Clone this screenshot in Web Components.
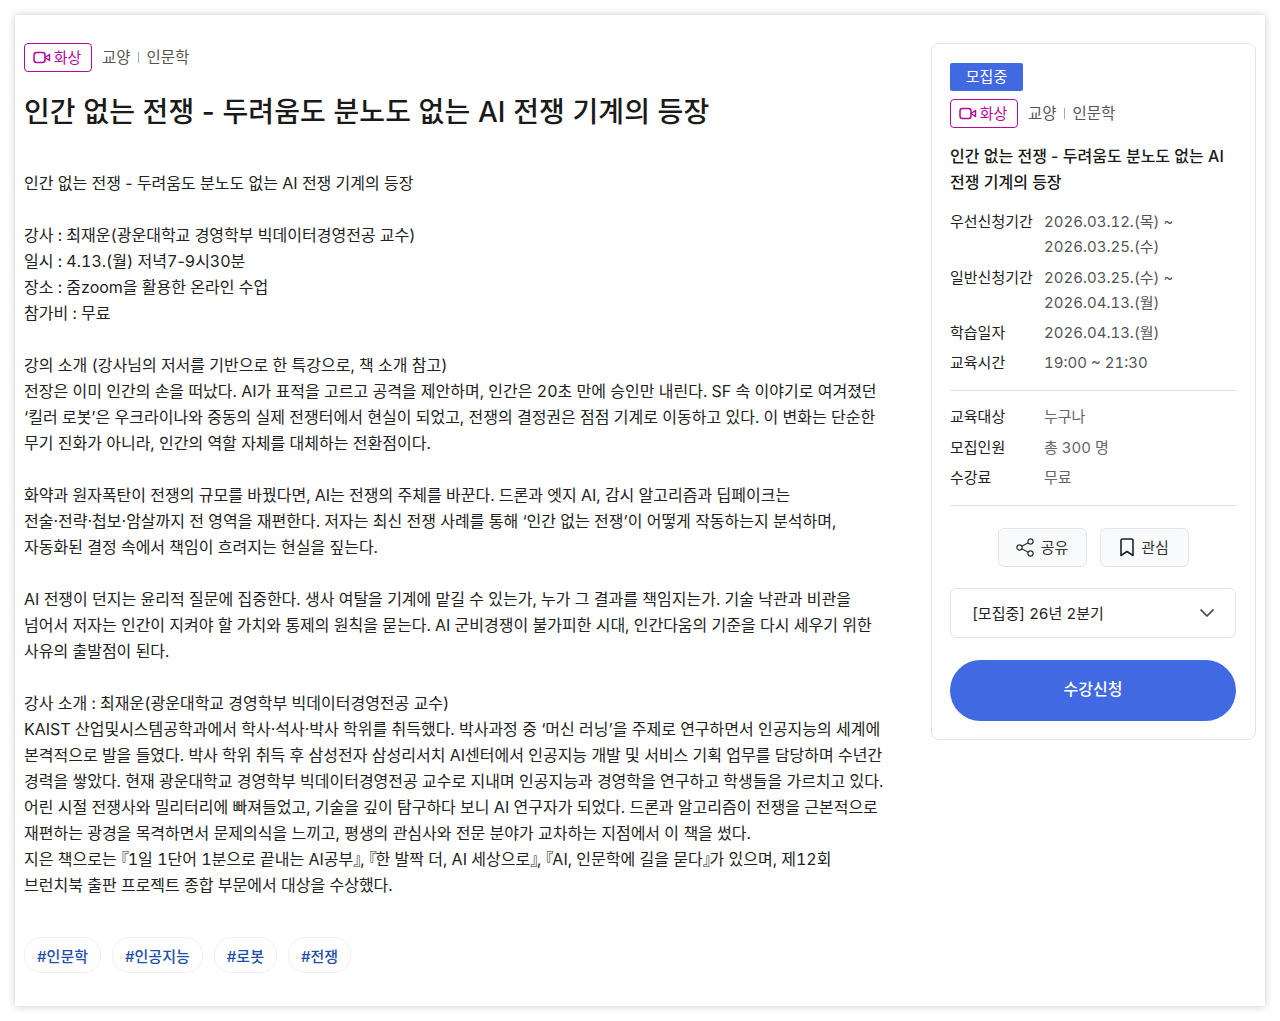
<!DOCTYPE html>
<html lang="ko">
<head>
<meta charset="utf-8">
<title>인간 없는 전쟁</title>
<style>
    html, body { margin: 0; padding: 0; background: #fff; }
    body {
        font-family: "Inter", "Noto Sans CJK KR", sans-serif;
        font-variant-numeric: tabular-nums;
        color: #1a1a1a;
    }
    .br { font-feature-settings: "halt"; letter-spacing: -1.2px; }
    .nt { font-variant-numeric: normal; }
</style>
</head>
<body>
<course-page>
    <course-main>
        <p>인간 없는 전쟁 <span class="nt">-</span> 두려움도 분노도 없는 AI 전쟁 기계의 등장</p>
        <p>강사 : 최재운(광운대학교 경영학부 빅데이터경영전공 교수)<br>일시 : 4.13.(월) 저녁7<span class="nt">-</span>9시30분<br>장소 : 줌zoom을 활용한 온라인 수업<br>참가비 : 무료</p>
        <p>강의 소개 (강사님의 저서를 기반으로 한 특강으로, 책 소개 참고)<br>전장은 이미 인간의 손을 떠났다. AI가 표적을 고르고 공격을 제안하며, 인간은 20초 만에 승인만 내린다. SF 속 이야기로 여겨졌던<br>‘킬러 로봇’은 우크라이나와 중동의 실제 전쟁터에서 현실이 되었고, 전쟁의 결정권은 점점 기계로 이동하고 있다. 이 변화는 단순한<br>무기 진화가 아니라, 인간의 역할 자체를 대체하는 전환점이다.</p>
        <p>화약과 원자폭탄이 전쟁의 규모를 바꿨다면, AI는 전쟁의 주체를 바꾼다. 드론과 엣지 AI, 감시 알고리즘과 딥페이크는<br>전술·전략·첩보·암살까지 전 영역을 재편한다. 저자는 최신 전쟁 사례를 통해 ‘인간 없는 전쟁’이 어떻게 작동하는지 분석하며,<br>자동화된 결정 속에서 책임이 흐려지는 현실을 짚는다.</p>
        <p>AI 전쟁이 던지는 윤리적 질문에 집중한다. 생사 여탈을 기계에 맡길 수 있는가, 누가 그 결과를 책임지는가. 기술 낙관과 비관을<br>넘어서 저자는 인간이 지켜야 할 가치와 통제의 원칙을 묻는다. AI 군비경쟁이 불가피한 시대, 인간다움의 기준을 다시 세우기 위한<br>사유의 출발점이 된다.</p>
        <p>강사 소개 : 최재운(광운대학교 경영학부 빅데이터경영전공 교수)<br>KAIST 산업및시스템공학과에서 학사·석사·박사 학위를 취득했다. 박사과정 중 ‘머신 러닝’을 주제로 연구하면서 인공지능의 세계에<br>본격적으로 발을 들였다. 박사 학위 취득 후 삼성전자 삼성리서치 AI센터에서 인공지능 개발 및 서비스 기획 업무를 담당하며 수년간<br>경력을 쌓았다. 현재 광운대학교 경영학부 빅데이터경영전공 교수로 지내며 인공지능과 경영학을 연구하고 학생들을 가르치고 있다.<br>어린 시절 전쟁사와 밀리터리에 빠져들었고, 기술을 깊이 탐구하다 보니 AI 연구자가 되었다. 드론과 알고리즘이 전쟁을 근본적으로<br>재편하는 광경을 목격하면서 문제의식을 느끼고, 평생의 관심사와 전문 분야가 교차하는 지점에서 이 책을 썼다.<br>지은 책으로는 <span class="br">『</span>1일 1단어 1분으로 끝내는 AI공부<span class="br">』</span>, <span class="br">『</span>한 발짝 더, AI 세상으로<span class="br">』</span>, <span class="br">『</span>AI, 인문학에 길을 묻다<span class="br">』</span>가 있으며, 제12회<br>브런치북 출판 프로젝트 종합 부문에서 대상을 수상했다.</p>
    </course-main>
    <course-aside></course-aside>
</course-page>

<script>
const VIDEO_ICON = `<svg width="18" height="13" viewBox="0 0 18 13" fill="none" stroke="currentColor" stroke-width="1.5" stroke-linejoin="round"><rect x="1" y="1.5" width="11" height="10" rx="2.5"/><path d="M12 6.5l4.5-3v6z"/></svg>`;

class CourseMeta extends HTMLElement {
    connectedCallback() {
        this.attachShadow({mode: 'open'}).innerHTML = `
        <style>
            :host { display: flex; align-items: center; font-size: 15.5px; color: #555; }
            .badge {
                display: flex; align-items: center; justify-content: center; gap: 3px;
                box-sizing: border-box; width: 68px; height: 29px; margin-right: 10px; padding-right: 2px;
                border: 1px solid #b5089b; border-radius: 4px; color: #b5089b; font-size: 15px;
            }
            .t { margin-bottom: 3px; }
            .sep { width: 1px; height: 11px; background: #aaa; margin: 0 8px 0 7px; }
        </style>
        <span class="badge">${VIDEO_ICON}<span class="t">화상</span></span>
        <span class="t">교양</span><span class="sep"></span><span class="t">인문학</span>`;
    }
}
customElements.define("course-meta", CourseMeta);

class TagChip extends HTMLElement {
    connectedCallback() {
        this.attachShadow({mode: 'open'}).innerHTML = `
        <style>
            :host {
                display: flex; align-items: center; height: 34px; padding: 0 12px;
                border: 1px solid #eef0f2; border-radius: 17px;
                font-size: 15px; font-weight: 500; color: #1f4fa8;
            }
        </style><slot></slot>`;
    }
}
customElements.define("tag-chip", TagChip);

class InfoRow extends HTMLElement {
    connectedCallback() {
        const grey = this.hasAttribute('grey');
        this.attachShadow({mode: 'open'}).innerHTML = `
        <style>
            :host { display: flex; font-size: 15px; line-height: 25px; color: #222; }
            .label { width: 94px; flex: none; }
            .value { color: ${grey ? '#666' : '#555'}; }
        </style>
        <span class="label">${this.getAttribute('label')}</span>
        <span class="value"><slot></slot></span>`;
    }
}
customElements.define("info-row", InfoRow);

class CourseMain extends HTMLElement {
    connectedCallback() {
        this.attachShadow({mode: 'open'}).innerHTML = `
        <style>
            :host { display: block; width: 880px; flex: none; }
            h1 {
                margin: 19px 0 0; font-size: 28px; line-height: 42px; font-weight: 500;
                letter-spacing: 0.1px; color: #1a1a1a; font-variant-numeric: normal;
            }
            .body {
                margin-top: 37px; font-size: 16px; line-height: 26px; color: #222;
                white-space: nowrap;
            }
            ::slotted(p) { margin: 0 0 26px; }
            .tags { display: flex; gap: 11px; margin-top: 39px; }
        </style>
        <course-meta></course-meta>
        <h1>인간 없는 전쟁 - 두려움도 분노도 없는 AI 전쟁 기계의 등장</h1>
        <div class="body"><slot></slot></div>
        <div class="tags">
            <tag-chip>#인문학</tag-chip><tag-chip>#인공지능</tag-chip><tag-chip>#로봇</tag-chip><tag-chip>#전쟁</tag-chip>
        </div>`;
    }
}
customElements.define("course-main", CourseMain);

class CourseAside extends HTMLElement {
    connectedCallback() {
        this.attachShadow({mode: 'open'}).innerHTML = `
        <style>
            :host {
                display: block; box-sizing: border-box; width: 325px; height: 697px; flex: none;
                padding: 19px 19px 0 18px; border: 1px solid #e3e5e8; border-radius: 8px;
            }
            .status {
                display: flex; align-items: center; justify-content: center;
                box-sizing: border-box; width: 73px; height: 28px; padding-bottom: 3px;
                border-radius: 2px; background: #4169e1; color: #fff; font-size: 15px;
            }
            course-meta { margin-top: 8px; }
            h2 {
                margin: 15px 0 0; font-size: 16px; line-height: 26px; font-weight: 500;
                color: #1a1a1a; font-variant-numeric: normal; white-space: nowrap;
            }
            .group { display: flex; flex-direction: column; gap: 5px; }
            .group info-row:first-child { margin-bottom: 1px; }
            .first { margin-top: 14px; }
            hr { border: 0; border-top: 1px solid #dfe1e4; margin: 15px 0 13px; }
            .actions { display: flex; justify-content: center; gap: 13px; margin-top: 22px; }
            .act {
                display: flex; align-items: center; justify-content: center; gap: 6px;
                box-sizing: border-box; width: 89px; height: 39px;
                border: 1px solid #e3e5e8; border-radius: 6px; background: #f9fafb;
                font-size: 15px; color: #333;
            }
            .act span { margin-bottom: 2px; }
            .select {
                display: flex; align-items: center; justify-content: space-between;
                box-sizing: border-box; height: 50px; margin-top: 21px; padding: 0 20px 0 21px;
                border: 1px solid #e3e5e8; border-radius: 6px;
                font-size: 15px; color: #222;
            }
            .select span { margin-bottom: 2px; }
            .apply {
                display: flex; align-items: center; justify-content: center;
                box-sizing: border-box; height: 61px; margin-top: 22px; padding-bottom: 5px;
                border-radius: 31px; background: #4169e1;
                color: #fff; font-size: 16px; font-weight: 500;
            }
        </style>
        <div class="status">모집중</div>
        <course-meta></course-meta>
        <h2>인간 없는 전쟁 - 두려움도 분노도 없는 AI<br>전쟁 기계의 등장</h2>
        <div class="group first">
            <info-row label="우선신청기간">2026.03.12.(목) ~<br>2026.03.25.(수)</info-row>
            <info-row label="일반신청기간">2026.03.25.(수) ~<br>2026.04.13.(월)</info-row>
            <info-row label="학습일자">2026.04.13.(월)</info-row>
            <info-row label="교육시간">19:00 ~ 21:30</info-row>
        </div>
        <hr>
        <div class="group">
            <info-row grey label="교육대상">누구나</info-row>
            <info-row grey label="모집인원">총 300 명</info-row>
            <info-row grey label="수강료">무료</info-row>
        </div>
        <hr style="margin-bottom:0">
        <div class="actions">
            <div class="act">
                <svg width="19" height="19" viewBox="0 0 19 19" fill="none" stroke="#333" stroke-width="1.2"><circle cx="14.5" cy="3.5" r="2.6"/><circle cx="3.5" cy="9.5" r="2.6"/><circle cx="14.5" cy="15.5" r="2.6"/><path d="M5.8 8.2l6.4-3.5M5.8 10.8l6.4 3.5"/></svg>
                <span>공유</span>
            </div>
            <div class="act">
                <svg width="16" height="19" viewBox="0 0 16 19" fill="none" stroke="#222" stroke-width="1.6" stroke-linejoin="round"><path d="M2 2.5a1.5 1.5 0 0 1 1.5-1.5h9a1.5 1.5 0 0 1 1.5 1.5v15l-6-4-6 4z"/></svg>
                <span>관심</span>
            </div>
        </div>
        <div class="select">
            <span>[모집중] 26년 2분기</span>
            <svg width="16" height="10" viewBox="0 0 16 10" fill="none" stroke="#444" stroke-width="1.7" stroke-linecap="round" stroke-linejoin="round"><path d="M2 2l6 6 6-6"/></svg>
        </div>
        <div class="apply">수강신청</div>`;
    }
}
customElements.define("course-aside", CourseAside);

class CoursePage extends HTMLElement {
    connectedCallback() {
        this.attachShadow({mode: 'open'}).innerHTML = `
        <style>
            :host {
                display: flex; box-sizing: border-box; width: 1250px; height: 991px; margin: 15px;
                padding: 28px 9px 0; gap: 27px; align-items: flex-start;
                background: #fff; box-shadow: 0 0 8px rgba(0,0,0,.22);
            }
        </style><slot></slot>`;
    }
}
customElements.define("course-page", CoursePage);
</script>
</body>
</html>
